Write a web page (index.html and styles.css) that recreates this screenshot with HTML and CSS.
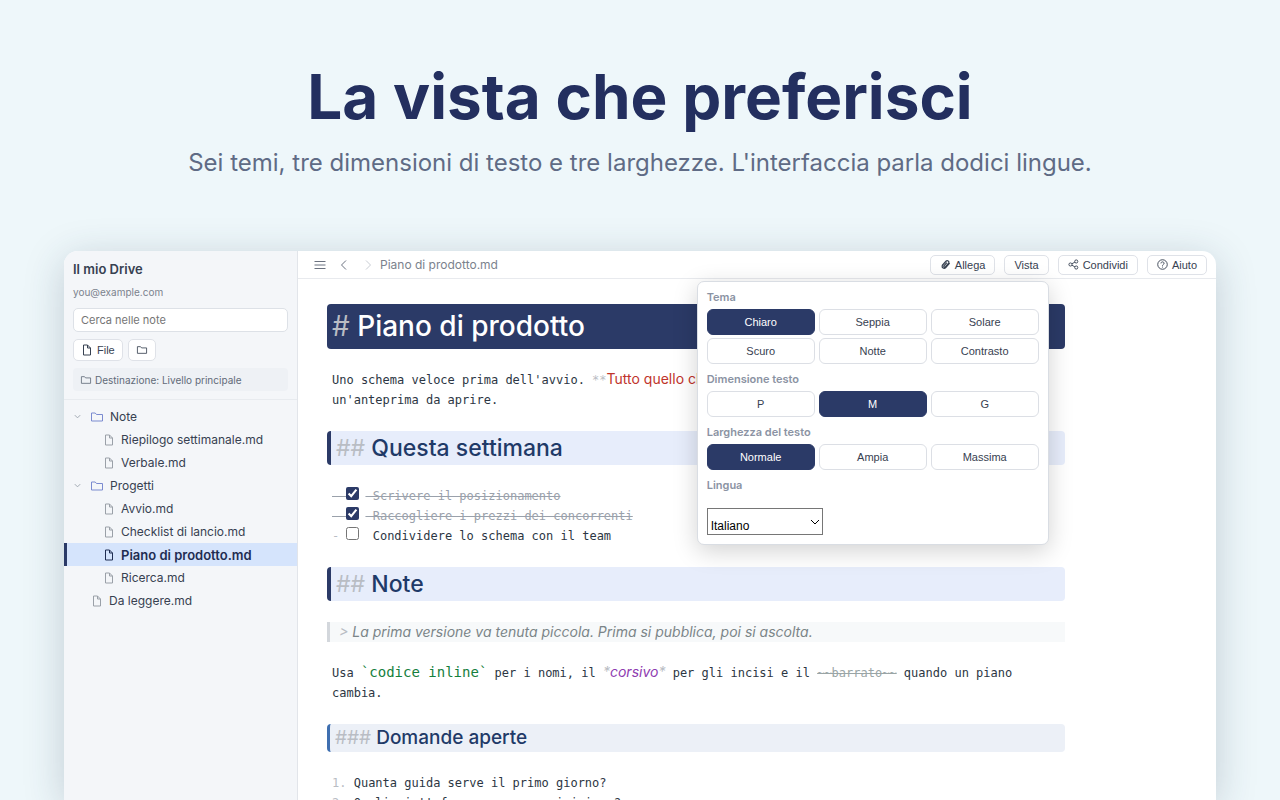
FILE: index.html
```html
<!DOCTYPE html>
<html lang="it">
<head>
  <meta charset="UTF-8">
  <meta name="viewport" content="width=device-width, initial-scale=1.0">
  <title>La vista che preferisci</title>
  <link rel="stylesheet" href="styles.css">
</head>
<body>

  <!-- shared icons -->
  <svg class="sprite" aria-hidden="true">
    <symbol id="i-file" viewBox="0 0 12 14"><path d="M2.500 2h4l3 3v7h-7zM6.500 2v3h3"/></symbol>
    <symbol id="i-folder" viewBox="0 0 14 12"><path d="M1.500 2h3.700l1.300 1.500h6v6.500h-11z"/></symbol>
    <symbol id="i-down" viewBox="0 0 10 10"><path d="M2 3.500l3 3 3-3"/></symbol>
  </svg>

  <header class="hero">
    <h1>La vista che preferisci</h1>
    <p>Sei temi, tre dimensioni di testo e tre larghezze. L'interfaccia parla dodici lingue.</p>
  </header>

  <main class="window">
    <aside class="sidebar">
      <div class="drive">
        <h2>Il mio Drive</h2>
        <p class="account">you@example.com</p>
        <input class="search" type="text" placeholder="Cerca nelle note" aria-label="Cerca nelle note">
        <div class="new-row">
          <button class="btn"><svg class="icon file"><use href="#i-file"/></svg>File</button>
          <button class="btn" aria-label="Nuova cartella"><svg class="icon folder"><use href="#i-folder"/></svg></button>
        </div>
        <p class="target"><svg class="icon folder"><use href="#i-folder"/></svg>Destinazione: Livello principale</p>
      </div>
      <nav class="tree">
        <a class="dir" href="#"><svg class="icon down"><use href="#i-down"/></svg><svg class="icon folder"><use href="#i-folder"/></svg>Note</a>
        <a class="doc nested" href="#"><svg class="icon file"><use href="#i-file"/></svg>Riepilogo settimanale.md</a>
        <a class="doc nested" href="#"><svg class="icon file"><use href="#i-file"/></svg>Verbale.md</a>
        <a class="dir" href="#"><svg class="icon down"><use href="#i-down"/></svg><svg class="icon folder"><use href="#i-folder"/></svg>Progetti</a>
        <a class="doc nested" href="#"><svg class="icon file"><use href="#i-file"/></svg>Avvio.md</a>
        <a class="doc nested" href="#"><svg class="icon file"><use href="#i-file"/></svg>Checklist di lancio.md</a>
        <a class="doc nested active" href="#"><svg class="icon file"><use href="#i-file"/></svg>Piano di prodotto.md</a>
        <a class="doc nested" href="#"><svg class="icon file"><use href="#i-file"/></svg>Ricerca.md</a>
        <a class="doc" href="#"><svg class="icon file"><use href="#i-file"/></svg>Da leggere.md</a>
      </nav>
    </aside>

    <section class="pane">
      <div class="toolbar">
        <button class="nav-btn" aria-label="Menu"><svg viewBox="0 0 12 12"><path d="M.500 2.500h11M.500 6h11M.500 9.500h11"/></svg></button>
        <button class="nav-btn" aria-label="Indietro"><svg viewBox="0 0 12 12"><path d="M8 1.500L3.500 6 8 10.500"/></svg></button>
        <button class="nav-btn" aria-label="Avanti" disabled><svg viewBox="0 0 12 12"><path d="M4 1.500L8.500 6 4 10.500"/></svg></button>
        <span class="path">Piano di prodotto.md</span>
        <div class="actions">
          <button class="btn"><svg class="icon small clip" viewBox="0 0 12 12"><path d="M10.500 4.500L6 9.500C4.500 11 1.500 9.500 2.500 7L6.500 2.500C8 1 10.500 2.500 9.500 4.500L6 8.500C5 9.500 3.500 8.500 4.500 7.200L7.500 4"/></svg>Allega</button>
          <div class="menu">
            <button class="btn" aria-expanded="true">Vista</button>
            <div class="popover">
              <h3>Tema</h3>
              <div class="options">
                <button class="on">Chiaro</button>
                <button>Seppia</button>
                <button>Solare</button>
                <button>Scuro</button>
                <button>Notte</button>
                <button>Contrasto</button>
              </div>
              <h3>Dimensione testo</h3>
              <div class="options">
                <button>P</button>
                <button class="on">M</button>
                <button>G</button>
              </div>
              <h3>Larghezza del testo</h3>
              <div class="options">
                <button class="on">Normale</button>
                <button>Ampia</button>
                <button>Massima</button>
              </div>
              <h3><label for="lang">Lingua</label></h3>
              <div class="select">
                <select id="lang">
                  <option>Italiano</option>
                  <option>English</option>
                </select>
                <svg viewBox="0 0 10 10"><path d="M1 3l4 4 4-4"/></svg>
              </div>
            </div>
          </div>
          <button class="btn"><svg class="icon small" viewBox="0 0 12 12"><circle cx="2.700" cy="6" r="1.700"/><circle cx="9" cy="2.700" r="1.700"/><circle cx="9" cy="9.300" r="1.700"/><path d="M4.200 5.200l3.300-1.700M4.200 6.800l3.300 1.700"/></svg>Condividi</button>
          <button class="btn"><svg class="icon small" viewBox="0 0 12 12"><circle cx="6" cy="6" r="5.200"/><path d="M4.300 4.800c0-2.200 3.400-2.200 3.400 0C7.700 6 6 6 6 7.300M6 8.300v1"/></svg>Aiuto</button>
        </div>
      </div>

      <article class="editor">
        <h1><span class="mark">#</span> Piano di prodotto</h1>
        <p>Uno schema veloce prima dell'avvio. <span class="mark">**</span><strong>Tutto quello che serve</strong><span class="mark">**</span> e<br>un'anteprima da aprire.</p>
        <h2><span class="mark">##</span> Questa settimana</h2>
        <div class="tasks">
          <label class="done"><span class="mark">- </span><input type="checkbox" checked> Scrivere il posizionamento</label>
          <label class="done"><span class="mark">- </span><input type="checkbox" checked> Raccogliere i prezzi dei concorrenti</label>
          <label><span class="mark">- </span><input type="checkbox"> Condividere lo schema con il team</label>
        </div>
        <h2><span class="mark">##</span> Note</h2>
        <blockquote><span class="mark">&gt;</span> La prima versione va tenuta piccola. Prima si pubblica, poi si ascolta.</blockquote>
        <p>Usa <code>`codice inline`</code> per i nomi, il <em><span class="mark">*</span>corsivo<span class="mark">*</span></em> per gli incisi e il <del>~~barrato~~</del> quando un piano cambia.</p>
        <h3><span class="mark">###</span> Domande aperte</h3>
        <p><span class="mark">1.</span> Quanta guida serve il primo giorno?<br><span class="mark">2.</span> Quali piattaforme servono a iniziare?</p>
      </article>
    </section>
  </main>

</body>
</html>
```
FILE: styles.css
```css
* {
  box-sizing: border-box;
}
body {
  margin: 0;
  height: 100vh;
  overflow: hidden;
  display: flex;
  flex-direction: column;
  font-family: Inter, sans-serif;
  background-color: #eef7fa;
  color: #374151;
}
h1, h2, h3, p, blockquote {
  margin: 0;
}
a {
  color: inherit;
  text-decoration: none;
}
svg {
  fill: none;
  stroke: currentColor;
}
.sprite {
  display: none;
}

/* headline */
.hero {
  padding-top: 60px;
  text-align: center;
}
.hero h1 {
  font-size: 62px;
  line-height: 74px;
  font-weight: 700;
  color: #232f5f;
}
.hero p {
  margin-top: 13px;
  font-size: 24px;
  line-height: 32px;
  color: #5f6b85;
}

/* app window */
.window {
  flex: 1;
  display: flex;
  width: 90%;
  margin: 72px auto 0;
  min-height: 0;
  background-color: #fff;
  border-radius: 14px 14px 0 0;
  box-shadow: 0 8px 40px rgba(35, 60, 80, 0.22);
}
.sidebar {
  width: 234px;
  flex: none;
  background-color: #f4f6f9;
  border-right: 1px solid #e2e5ea;
  border-radius: 14px 0 0 0;
}
.drive {
  padding: 9px 9px 8px;
  border-bottom: 1px solid #e8ebef;
}
.drive h2 {
  font-size: 13px;
  line-height: 18px;
  font-weight: 600;
}
.account {
  margin-top: 6px;
  font-size: 10px;
  line-height: 16px;
  color: #7b828d;
}
.search {
  display: block;
  width: 100%;
  height: 24px;
  margin-top: 8px;
  padding: 0 7px;
  border: 1px solid #dde1e7;
  border-radius: 5px;
  font-family: Inter, sans-serif;
  font-size: 11px;
}
.search::placeholder {
  color: #757575;
}
.btn {
  display: inline-flex;
  align-items: center;
  gap: 4px;
  height: 20px;
  padding: 0 9px;
  border: 1px solid #dfe2e8;
  border-radius: 5px;
  background-color: #fff;
  color: #374151;
  font-family: "Liberation Sans", Arial, sans-serif;
  font-size: 11px;
}
.new-row {
  display: flex;
  gap: 5px;
  margin: 7px 0;
}
.new-row .btn {
  height: 22px;
  padding: 0 7px;
}
.icon.file {
  width: 12px;
  height: 14px;
}
.icon.folder {
  width: 12px;
  height: 10px;
}
.icon.down {
  width: 9px;
  height: 9px;
  color: #9aa1ab;
}
.icon.small {
  width: 11px;
  height: 11px;
}
.icon.clip {
  stroke-width: 1.4;
}
.target {
  display: flex;
  align-items: center;
  gap: 3px;
  padding: 0 7px;
  height: 23px;
  border-radius: 4px;
  background-color: #eef1f5;
  font-size: 10px;
  color: #626b79;
}
.tree {
  padding-top: 5px;
  font-size: 12px;
}
.tree a {
  display: flex;
  align-items: center;
  gap: 6px;
  height: 23px;
  padding-left: 9px;
}
.tree .folder {
  width: 14px;
  height: 12px;
  margin-left: 2px;
  color: #7b8bd0;
}
.tree .doc {
  padding-left: 27px;
}
.tree .nested {
  padding-left: 39px;
}
.tree .file {
  color: #9aa0a8;
}
.tree .active {
  padding-left: 36px;
  border-left: 3px solid #2b3a67;
  background-color: #d5e4fc;
  color: #1f2d52;
  font-size: 13px;
  font-weight: 600;
}
.tree .active .file {
  color: #1f2d52;
}

/* toolbar */
.pane {
  flex: 1;
  min-width: 0;
}
.toolbar {
  display: flex;
  align-items: center;
  height: 28px;
  padding: 0 9px 0 16px;
  border-bottom: 1px solid #e8eaee;
}
.nav-btn {
  display: flex;
  width: 12px;
  height: 12px;
  padding: 0;
  margin-right: 12px;
  border: 0;
  background: none;
  color: #6b7280;
}
.nav-btn:disabled {
  color: #c9cdd4;
  margin-right: 6px;
}
.path {
  font-size: 12px;
  color: #7b828d;
}
.actions {
  display: flex;
  gap: 9px;
  margin-left: auto;
}
.menu {
  position: relative;
  display: flex;
}

/* view popover */
.popover {
  position: absolute;
  top: 26px;
  right: 0;
  z-index: 1;
  width: 352px;
  padding: 7px 9px 9px;
  border: 1px solid #d9dde3;
  border-radius: 7px;
  background-color: #fff;
  box-shadow: 0 6px 24px rgba(0, 0, 0, 0.18);
}
.popover h3 {
  font-size: 11px;
  line-height: 16px;
  font-weight: 600;
  color: #8b93a3;
}
.options {
  display: grid;
  grid-template-columns: repeat(3, 1fr);
  gap: 3px 4px;
  margin: 4px 0 7px;
}
.options button {
  height: 26px;
  padding: 0;
  border: 1px solid #dcdfe5;
  border-radius: 6px;
  background-color: #fff;
  color: #374151;
  font-family: "Liberation Sans", Arial, sans-serif;
  font-size: 11px;
}
.options .on {
  border-color: #2b3a67;
  background-color: #2b3a67;
  color: #fff;
}
.select {
  position: relative;
  width: 116px;
  margin-top: 15px;
}
.select select {
  display: block;
  appearance: none;
  width: 100%;
  height: 27px;
  padding: 10px 3px 0;
  border: 1px solid #767676;
  border-radius: 0;
  background-color: #fff;
  color: #000;
  font-family: "Liberation Sans", Arial, sans-serif;
  font-size: 12px;
}
.select svg {
  position: absolute;
  right: 3px;
  top: 9px;
  width: 10px;
  height: 10px;
  color: #000;
}

/* markdown editor */
.editor {
  display: flex;
  flex-direction: column;
  gap: 21px;
  max-width: 796px;
  padding: 25px 29px 0;
  font-family: "DejaVu Sans Mono", monospace;
  font-size: 12px;
  line-height: 20px;
  color: #2c3643;
}
.editor p {
  padding-left: 5px;
}
.editor h1, .editor h2, .editor h3 {
  font-family: Inter, sans-serif;
  font-weight: 500;
  color: #1f3a68;
  border-radius: 4px;
}
.editor h1 {
  padding-left: 5px;
  font-size: 28px;
  line-height: 45px;
  color: #fff;
  background-color: #2b3a67;
}
.editor h2 {
  padding-left: 5px;
  font-size: 23px;
  line-height: 34px;
  border-left: 4px solid #2b3a67;
  background-color: #e7edfb;
}
.editor h3 {
  padding-left: 5px;
  font-size: 19px;
  line-height: 28px;
  border-left: 3px solid #3f6fb0;
  background-color: #ecf0f7;
}
.mark {
  font-weight: 400;
  color: #b9bdc4;
}
.tasks {
  padding-left: 5px;
}
.tasks label {
  display: block;
  height: 20px;
  white-space: pre;
}
.tasks input {
  width: 13px;
  height: 13px;
  margin: 0 6px 0 0;
  vertical-align: 0;
  accent-color: #2b3a67;
}
.tasks .done {
  color: #9aa1ab;
  text-decoration: line-through;
}
blockquote {
  padding-left: 9px;
  border-left: 3px solid #d3d7dc;
  background-color: #f7f9fa;
  font-family: Inter, sans-serif;
  font-size: 14px;
  font-style: italic;
  color: #7b8588;
}
strong, em, code {
  line-height: 16px;
}
strong, em {
  font-family: Inter, sans-serif;
  font-size: 14px;
}
strong {
  font-weight: 400;
  color: #c0342b;
}
em {
  color: #8e3bb0;
}
code {
  font-family: "DejaVu Sans Mono", monospace;
  font-size: 14px;
  color: #15803d;
}
del {
  color: #9aa5a6;
}
```
